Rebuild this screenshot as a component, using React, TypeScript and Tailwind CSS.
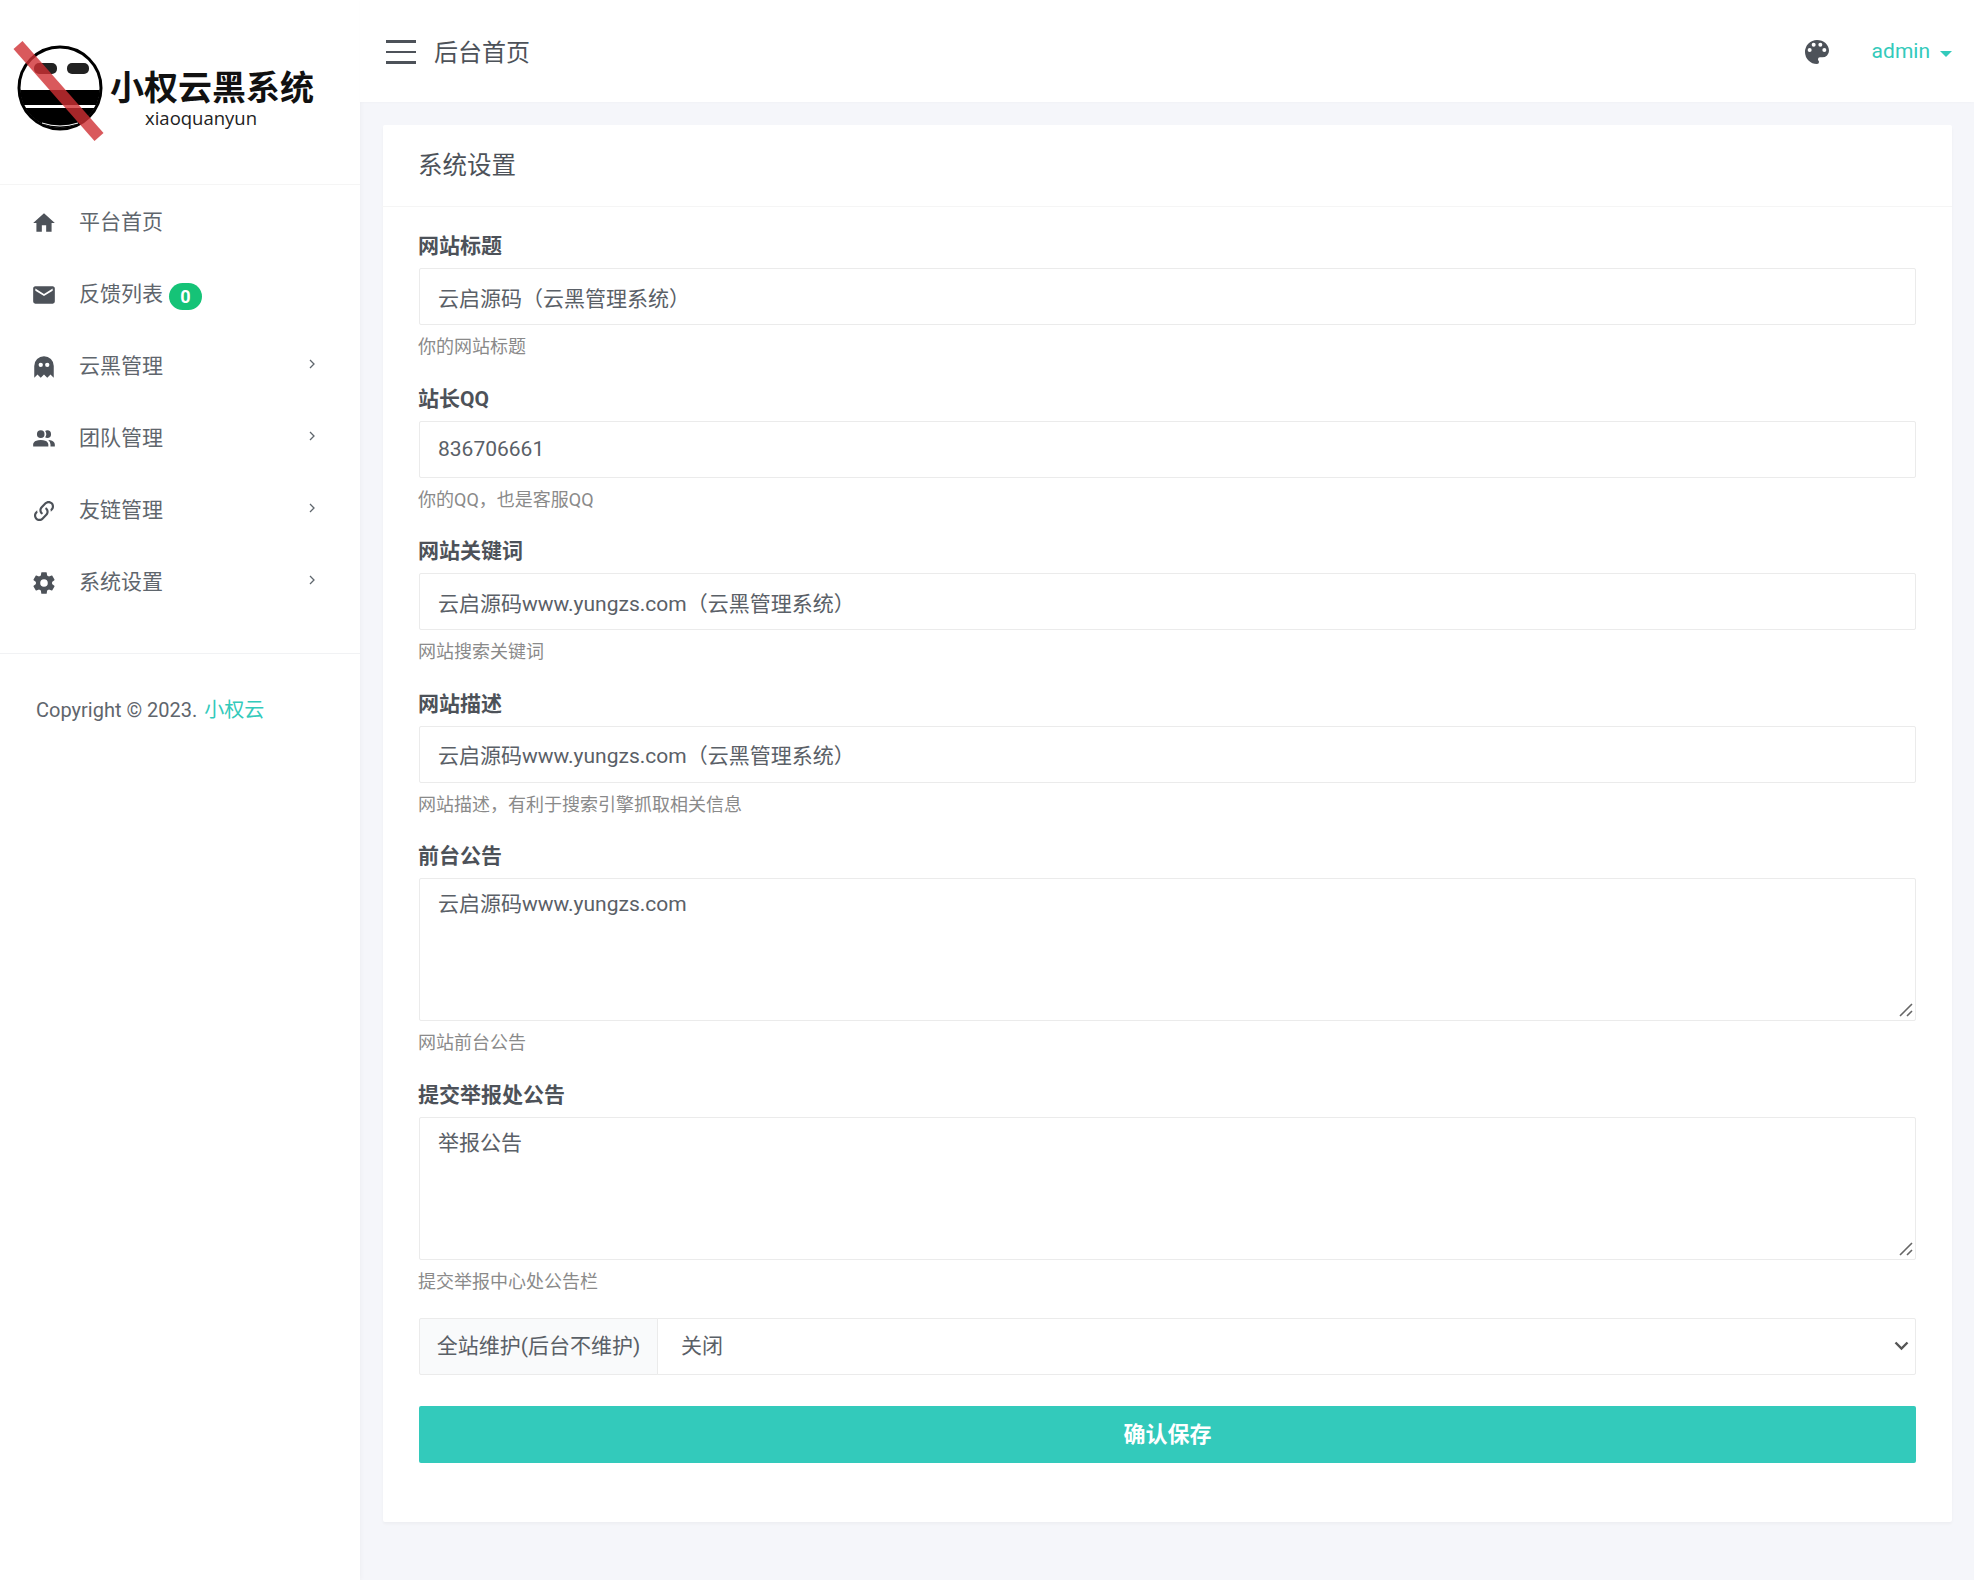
import React from "react";

const mdi = {
  home: "M10,20V14H14V20H19V12H22L12,3L2,12H5V20H10Z",
  email:
    "M20,8L12,13L4,8V6L12,11L20,6M20,4H4C2.89,4 2,4.89 2,6V18A2,2 0 0,0 4,20H20A2,2 0 0,0 22,18V6C22,4.89 21.1,4 20,4Z",
  ghost:
    "M12,2A9,9 0 0,0 3,11V22L6,19L9,22L12,19L15,22L18,19L21,22V11A9,9 0 0,0 12,2M9,8A2,2 0 0,1 11,10A2,2 0 0,1 9,12A2,2 0 0,1 7,10A2,2 0 0,1 9,8M15,8A2,2 0 0,1 17,10A2,2 0 0,1 15,12A2,2 0 0,1 13,10A2,2 0 0,1 15,8Z",
  people:
    "M16 17V19H2V17S2 13 9 13 16 17 16 17M12.5 7.5A3.5 3.5 0 1 0 9 11A3.5 3.5 0 0 0 12.5 7.5M15.94 13A5.32 5.32 0 0 1 18 17V19H22V17S22 13.37 15.94 13M15 4A3.39 3.39 0 0 0 13.07 4.59A5 5 0 0 1 13.07 10.41A3.39 3.39 0 0 0 15 11A3.5 3.5 0 0 0 15 4Z",
  link: "M10.59,13.41C11,13.8 11,14.44 10.59,14.83C10.2,15.22 9.56,15.22 9.17,14.83C7.22,12.88 7.22,9.71 9.17,7.76V7.76L12.71,4.22C14.66,2.27 17.83,2.27 19.78,4.22C21.73,6.17 21.73,9.34 19.78,11.29L18.29,12.78C18.3,11.96 18.17,11.14 17.89,10.36L18.36,9.88C19.54,8.71 19.54,6.81 18.36,5.64C17.19,4.46 15.29,4.46 14.12,5.64L10.59,9.17C9.41,10.34 9.41,12.24 10.59,13.41M13.41,9.17C13.8,8.78 14.44,8.78 14.83,9.17C16.78,11.12 16.78,14.29 14.83,16.24V16.24L11.29,19.78C9.34,21.73 6.17,21.73 4.22,19.78C2.27,17.83 2.27,14.66 4.22,12.71L5.71,11.22C5.7,12.04 5.83,12.86 6.11,13.65L5.64,14.12C4.46,15.29 4.46,17.19 5.64,18.36C6.81,19.54 8.71,19.54 9.88,18.36L13.41,14.83C14.59,13.66 14.59,11.76 13.41,10.59C13,10.2 13,9.56 13.41,9.17Z",
  cog: "M12,15.5A3.5,3.5 0 0,1 8.5,12A3.5,3.5 0 0,1 12,8.5A3.5,3.5 0 0,1 15.5,12A3.5,3.5 0 0,1 12,15.5M19.43,12.97C19.47,12.65 19.5,12.33 19.5,12C19.5,11.67 19.47,11.34 19.43,11L21.54,9.37C21.73,9.22 21.78,8.95 21.66,8.73L19.66,5.27C19.54,5.05 19.27,4.96 19.05,5.05L16.56,6.05C16.04,5.66 15.5,5.32 14.87,5.07L14.5,2.42C14.46,2.18 14.25,2 14,2H10C9.75,2 9.54,2.18 9.5,2.42L9.13,5.07C8.5,5.32 7.96,5.66 7.44,6.05L4.95,5.05C4.73,4.96 4.46,5.05 4.34,5.27L2.34,8.73C2.21,8.95 2.27,9.22 2.46,9.37L4.57,11C4.53,11.34 4.5,11.67 4.5,12C4.5,12.33 4.53,12.65 4.57,12.97L2.46,14.63C2.27,14.78 2.21,15.05 2.34,15.27L4.34,18.73C4.46,18.95 4.73,19.03 4.95,18.95L7.44,17.94C7.96,18.34 8.5,18.68 9.13,18.93L9.5,21.58C9.54,21.82 9.75,22 10,22H14C14.25,22 14.46,21.82 14.5,21.58L14.87,18.93C15.5,18.67 16.04,18.34 16.56,17.94L19.05,18.95C19.27,19.03 19.54,18.95 19.66,18.73L21.66,15.27C21.78,15.05 21.73,14.78 21.54,14.63L19.43,12.97Z",
  palette:
    "M17.5,12A1.5,1.5 0 0,1 16,10.5A1.5,1.5 0 0,1 17.5,9A1.5,1.5 0 0,1 19,10.5A1.5,1.5 0 0,1 17.5,12M14.5,8A1.5,1.5 0 0,1 13,6.5A1.5,1.5 0 0,1 14.5,5A1.5,1.5 0 0,1 16,6.5A1.5,1.5 0 0,1 14.5,8M9.5,8A1.5,1.5 0 0,1 8,6.5A1.5,1.5 0 0,1 9.5,5A1.5,1.5 0 0,1 11,6.5A1.5,1.5 0 0,1 9.5,8M6.5,12A1.5,1.5 0 0,1 5,10.5A1.5,1.5 0 0,1 6.5,9A1.5,1.5 0 0,1 8,10.5A1.5,1.5 0 0,1 6.5,12M12,3A9,9 0 0,0 3,12A9,9 0 0,0 12,21A1.5,1.5 0 0,0 13.5,19.5C13.5,19.11 13.35,18.76 13.11,18.5C12.88,18.23 12.73,17.88 12.73,17.5A1.5,1.5 0 0,1 14.23,16H16A5,5 0 0,0 21,11C21,6.58 16.97,3 12,3Z",
};

const Icon = ({ d, size = 26 }: { d: string; size?: number }) => (
  <svg width={size} height={size} viewBox="0 0 24 24" fill="currentColor">
    <path d={d} />
  </svg>
);

const Logo = () => (
  <svg width="360" height="184" viewBox="0 0 360 184" className="block">
    <defs>
      <clipPath id="face">
        <circle cx="60" cy="88" r="40" />
      </clipPath>
    </defs>
    <circle cx="60" cy="88" r="41" fill="#fff" stroke="#000" strokeWidth="3" />
    <rect x="34" y="63" width="23" height="11" rx="5" fill="#222" />
    <rect x="67" y="63" width="22" height="11" rx="5" fill="#222" />
    <g clipPath="url(#face)">
      <rect x="15" y="90" width="90" height="15" fill="#000" />
      <rect x="15" y="108" width="90" height="30" fill="#000" />
    </g>
    <path d="M42 123 Q60 129 78 123" fill="none" stroke="#fff" strokeWidth="1" />
    <path d="M18 45 L99 137" stroke="#cf2f33" strokeOpacity="0.8" strokeWidth="12" />
    <text
      x="110"
      y="100"
      fontSize="34"
      fontWeight="700"
      fill="#111"
      fontFamily="'Noto Sans CJK SC', sans-serif"
    >
      小权云黑系统
    </text>
    <text
      x="145"
      y="125"
      fontSize="18.5"
      fill="#222"
      fontFamily="'Open Sans', sans-serif"
    >
      xiaoquanyun
    </text>
  </svg>
);

const ResizeGrip = () => (
  <svg
    width="14"
    height="14"
    viewBox="0 0 14 14"
    stroke="#666"
    strokeWidth="1.6"
    className="pointer-events-none absolute bottom-[4px] right-[3px]"
  >
    <path d="M1 13L13 1M8 13l5-5" />
  </svg>
);

const nav = [
  { label: "平台首页", icon: mdi.home },
  { label: "反馈列表", icon: mdi.email, badge: "0" },
  { label: "云黑管理", icon: mdi.ghost, more: true },
  { label: "团队管理", icon: mdi.people, more: true },
  { label: "友链管理", icon: mdi.link, more: true },
  { label: "系统设置", icon: mdi.cog, more: true },
];

const fields = [
  { label: "网站标题", value: "云启源码（云黑管理系统）", help: "你的网站标题" },
  { label: "站长QQ", value: "836706661", help: "你的QQ，也是客服QQ" },
  {
    label: "网站关键词",
    value: "云启源码www.yungzs.com（云黑管理系统）",
    help: "网站搜索关键词",
  },
  {
    label: "网站描述",
    value: "云启源码www.yungzs.com（云黑管理系统）",
    help: "网站描述，有利于搜索引擎抓取相关信息",
  },
  {
    label: "前台公告",
    value: "云启源码www.yungzs.com",
    help: "网站前台公告",
    multi: true,
  },
  {
    label: "提交举报处公告",
    value: "举报公告",
    help: "提交举报中心处公告栏",
    multi: true,
  },
];

const App = () => {
  return (
    <div className="flex min-h-[1580px] bg-[#f5f6fa] font-['Roboto','Noto_Sans_CJK_SC',sans-serif] text-[21px] text-[#4d5259]">
      {/* SIDEBAR */}
      <aside className="w-[360px] shrink-0 bg-white shadow-[1px_0_5px_rgba(0,0,0,0.035)]">
        <div className="h-[185px] border-b border-[#f5f5f5]">
          <Logo />
        </div>
        <nav className="pb-[34px] pt-[2px]">
          {nav.map((item) => (
            <div key={item.label} className="flex h-[72px] items-center">
              <span className="mb-[1px] flex w-[79px] justify-center pl-[9px] text-[#4d5259]">
                <Icon d={item.icon} />
              </span>
              <span className="text-[21px] text-[#5f666d]">{item.label}</span>
              {item.badge && (
                <span className="ml-[6px] mt-[2px] flex h-[27px] w-[33px] items-center justify-center rounded-full bg-[#15c377] text-[18px] font-bold text-white">
                  {item.badge}
                </span>
              )}
              {item.more && (
                <svg
                  width="8"
                  height="10"
                  viewBox="0 0 8 10"
                  fill="none"
                  stroke="#5f666d"
                  strokeWidth="1.3"
                  className="mb-[6px] ml-[145px]"
                >
                  <path d="M2 1l4 4-4 4" />
                </svg>
              )}
            </div>
          ))}
        </nav>
        <div className="border-t border-[#f1f2f4] px-[36px] pt-[41px] text-[20px] text-[#5f666d]">
          Copyright © 2023. <span className="ml-[2px] text-[#33cabb]">小权云</span>
        </div>
      </aside>

      <div className="min-w-0 flex-1">
        {/* HEADER */}
        <header className="flex h-[102px] items-center bg-white pl-[26px] pr-[22px] pt-[2px] shadow-[0_1px_3px_rgba(0,0,0,0.02)]">
          <div className="flex w-[30px] flex-col gap-[8px]">
            <span className="h-[3px] bg-[#4d5259]" />
            <span className="h-[2px] bg-[#4d5259]" />
            <span className="h-[3px] bg-[#4d5259]" />
          </div>
          <span className="ml-[18px] mt-[1px] text-[24px]">后台首页</span>
          <span className="ml-auto text-[#4d5259]">
            <Icon d={mdi.palette} size={32} />
          </span>
          <span className="ml-[39px] text-[21px] text-[#33cabb]">admin</span>
          <span className="ml-[10px] mt-[3px] border-x-[6px] border-t-[6px] border-x-transparent border-t-[#33cabb]" />
        </header>

        {/* CARD */}
        <main className="pb-[58px] pl-[23px] pr-[22px] pt-[23px]">
          <section className="rounded-[2px] bg-white shadow-[0_2px_3px_rgba(0,0,0,0.035)]">
            <div className="-ml-px flex h-[82px] items-center border-b border-[#f5f5f5] px-[36px] pt-[2px] text-[24.5px]">
              系统设置
            </div>
            <form className="px-[36px] pb-[59px] pt-[24px]">
              {fields.map((f) => (
                <div key={f.label} className="mb-[21.5px]">
                  <label className="-ml-px mb-[7px] block text-[21px] font-bold leading-[30px]">
                    {f.label}
                  </label>
                  {f.multi ? (
                    <div className="relative">
                      <textarea
                        defaultValue={f.value}
                        className="block h-[143px] w-full resize-none rounded-[2px] border border-[#ebebeb] px-[18px] py-[10px] text-[21px] leading-[30px] text-[#5a6067] outline-none"
                      />
                      <ResizeGrip />
                    </div>
                  ) : (
                    <input
                      defaultValue={f.value}
                      className="block h-[57px] w-full rounded-[2px] border border-[#ebebeb] px-[18px] text-[21px] text-[#5a6067] outline-none"
                    />
                  )}
                  <small className="-ml-px mt-[7px] block text-[18px] leading-[30px] text-[#8a8a8a]">
                    {f.help}
                  </small>
                </div>
              ))}

              <div className="mb-[31px] flex h-[57px]">
                <span className="flex w-[239px] items-center justify-center rounded-l-[2px] border border-[#ebebeb] bg-[#f9fafb] text-[21px] text-[#5a6067]">
                  全站维护(后台不维护)
                </span>
                <div className="relative -ml-px min-w-0 flex-1">
                  <select className="h-full w-full appearance-none rounded-r-[2px] border border-[#ebebeb] bg-white px-[23px] text-[21px] text-[#5a6067] outline-none">
                    <option>关闭</option>
                    <option>开启</option>
                  </select>
                  <svg
                    width="15"
                    height="10"
                    viewBox="0 0 15 10"
                    fill="none"
                    stroke="#555"
                    strokeWidth="2.4"
                    className="pointer-events-none absolute right-[7px] top-[23px]"
                  >
                    <path d="M1.5 1.5l6 6 6-6" />
                  </svg>
                </div>
              </div>

              <button
                type="button"
                className="block h-[57px] w-full rounded-[2px] bg-[#33cabb] text-[22px] font-bold text-white"
              >
                确认保存
              </button>
            </form>
          </section>
        </main>
      </div>
    </div>
  );
};

export default App;
